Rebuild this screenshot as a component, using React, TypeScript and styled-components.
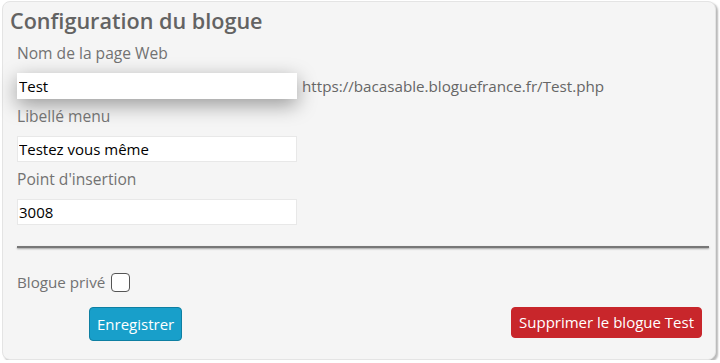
import React from "react";
import styled, { createGlobalStyle } from "styled-components";

const Global = createGlobalStyle`
  html, body { margin: 0; padding: 0; background: #ffffff; }
  body { font-family: "Open Sans", "Noto Sans", sans-serif; }
  * { box-sizing: border-box; }
`;

const Panel = styled.section`
  margin: 1px 4px 0 2px;
  height: 359px;
  background: #f5f5f5;
  border: 1px solid #e4e4e4;
  border-radius: 8px;
  box-shadow: 2px 2px 2px rgba(0, 0, 0, 0.28);
  padding: 5px 6px 0 7px;
  display: flex;
  flex-direction: column;
`;

const Title = styled.h2`
  margin: 0;
  font-size: 21.6px;
  line-height: 28px;
  font-weight: 600;
  color: #636363;
`;

const Form = styled.div`
  display: flex;
  flex-direction: column;
  padding-left: 7px;
  margin-top: 7px;
`;

const Field = styled.div`
  display: flex;
  flex-direction: column;
  gap: 9px;
  & + & {
    margin-top: 6px;
  }
`;

const Label = styled.label`
  font-size: 15.6px;
  line-height: 22px;
  color: #727272;
`;

const InputRow = styled.div`
  display: flex;
  align-items: center;
  gap: 5px;
`;

const TextInput = styled.input<{ $focused?: boolean }>`
  width: 280px;
  height: 26px;
  padding: 0 1px;
  border: 1px solid ${(p) => (p.$focused ? "#ffffff" : "#e8e8e8")};
  background: #ffffff;
  font-family: "Open Sans", "Noto Sans", sans-serif;
  font-size: 15px;
  color: #000;
  outline: none;
  box-shadow: ${(p) => (p.$focused ? "0 6px 20px rgba(0,0,0,0.38)" : "none")};
`;

const UrlText = styled.span`
  font-size: 15.2px;
  color: #666666;
`;

const Rule = styled.hr`
  margin: 21px 0 0 7px;
  border: none;
  border-top: 2px solid #777777;
  box-shadow: 0 1px 2px rgba(0, 0, 0, 0.35);
  height: 0;
`;

const CheckRow = styled.label`
  margin-top: 24px;
  padding-left: 7px;
  display: flex;
  align-items: center;
  gap: 6px;
  font-size: 15.2px;
  color: #727272;
`;

const Box = styled.span`
  width: 19px;
  height: 19px;
  border: 1px solid #555555;
  border-radius: 4px;
  background: #ffffff;
  display: inline-block;
`;

const Actions = styled.div`
  margin-top: 15px;
  padding: 0 7px 0 79px;
  display: flex;
  justify-content: space-between;
  align-items: flex-start;
`;

const Button = styled.button<{ $variant: "info" | "danger" }>`
  font-family: "Open Sans", "Noto Sans", sans-serif;
  font-size: 15px;
  color: #ffffff;
  border-radius: 4px;
  cursor: pointer;
  padding: 0 7px;
  background: ${(p) => (p.$variant === "info" ? "#189fca" : "#c8262b")};
  border: 1px solid ${(p) => (p.$variant === "info" ? "#0e7fa2" : "#c8262b")};
  height: ${(p) => (p.$variant === "info" ? "34px" : "31px")};
  line-height: 1;
`;

export default function App() {
  return (
    <>
      <Global />
      <Panel>
        <Title>Configuration du blogue</Title>
        <Form>
          <Field>
            <Label>Nom de la page Web</Label>
            <InputRow>
              <TextInput $focused defaultValue="Test" />
              <UrlText>https://bacasable.bloguefrance.fr/Test.php</UrlText>
            </InputRow>
          </Field>
          <Field>
            <Label>Libellé menu</Label>
            <InputRow>
              <TextInput defaultValue="Testez vous même" />
            </InputRow>
          </Field>
          <Field>
            <Label>Point d'insertion</Label>
            <InputRow>
              <TextInput defaultValue="3008" />
            </InputRow>
          </Field>
        </Form>
        <Rule />
        <CheckRow>
          Blogue privé
          <Box />
        </CheckRow>
        <Actions>
          <Button $variant="info">Enregistrer</Button>
          <Button $variant="danger">Supprimer le blogue Test</Button>
        </Actions>
      </Panel>
    </>
  );
}
